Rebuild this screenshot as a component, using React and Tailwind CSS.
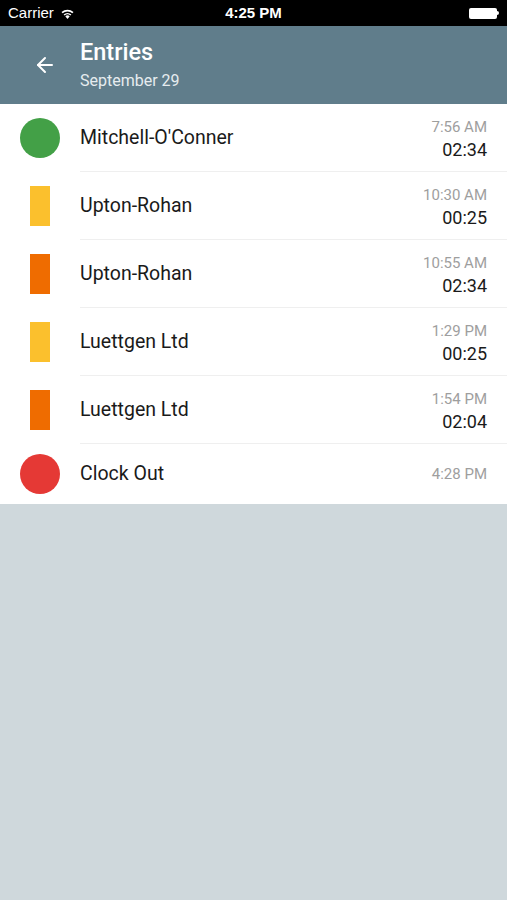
import { ArrowLeft } from 'lucide-react';

const entries = [
  { name: "Mitchell-O'Conner", time: '7:56 AM', duration: '02:34', marker: 'circle', color: 'bg-[#43a047]' },
  { name: 'Upton-Rohan', time: '10:30 AM', duration: '00:25', marker: 'bar', color: 'bg-[#fbc02d]' },
  { name: 'Upton-Rohan', time: '10:55 AM', duration: '02:34', marker: 'bar', color: 'bg-[#ef6c00]' },
  { name: 'Luettgen Ltd', time: '1:29 PM', duration: '00:25', marker: 'bar', color: 'bg-[#fbc02d]' },
  { name: 'Luettgen Ltd', time: '1:54 PM', duration: '02:04', marker: 'bar', color: 'bg-[#ef6c00]' },
  { name: 'Clock Out', time: '4:28 PM', marker: 'circle', color: 'bg-[#e53935]' },
];

const StatusBar = () => (
  <div className="h-[26px] bg-black text-white flex items-center justify-between px-2 font-['Liberation_Sans',sans-serif] relative">
    <div className="flex items-center gap-1.5 text-[15px]">
      <span>Carrier</span>
      <svg width="15" height="11" viewBox="0 0 15 11" fill="white">
        <path d="M7.5 11 L5.3 8.3 A3.4 3.4 0 0 1 9.7 8.3 Z" />
        <path d="M3.6 6.4 A5.8 5.8 0 0 1 11.4 6.4 L10.3 7.6 A4.2 4.2 0 0 0 4.7 7.6 Z" />
        <path d="M1.5 4.1 A9 9 0 0 1 13.5 4.1 L12.4 5.3 A7.4 7.4 0 0 0 2.6 5.3 Z" />
      </svg>
    </div>
    <span className="absolute left-1/2 -translate-x-1/2 text-[15px] font-bold">4:25 PM</span>
    <div className="flex items-center">
      <div className="w-[28px] h-[11px] bg-white rounded-[2px]" />
      <div className="w-[2px] h-[4px] bg-white rounded-r-sm" />
    </div>
  </div>
);

const Row = ({ entry, last }) => (
  <div className="flex items-stretch">
    <div className="w-[80px] flex items-center justify-center shrink-0">
      {entry.marker === 'circle' ? (
        <div className={`w-[40px] h-[40px] rounded-full ${entry.color}`} />
      ) : (
        <div className={`w-[20px] h-[40px] ${entry.color}`} />
      )}
    </div>
    <div
      className={`flex-1 flex items-center justify-between pr-5 ${
        last ? 'h-[60px]' : 'h-[68px] border-b border-[#efefef]'
      }`}
    >
      <span className="text-[19.5px] text-[#1a1a1a]">{entry.name}</span>
      <div className={`flex flex-col items-end ${entry.duration ? 'pt-[4px]' : ''}`}>
        <span className="text-[15px] text-[#9e9e9e] leading-[20px]">{entry.time}</span>
        {entry.duration && (
          <span className="text-[18px] text-[#1a1a1a] leading-[25px]">{entry.duration}</span>
        )}
      </div>
    </div>
  </div>
);

export default function App() {
  return (
    <div className="w-[507px] h-[900px] bg-[#cfd8dc] font-['Roboto',sans-serif] flex flex-col">
      <StatusBar />
      <div className="h-[78px] bg-[#607d8b] flex items-center">
        <div className="w-[80px] flex justify-center pl-[10px]">
          <ArrowLeft size={24} strokeWidth={2} className="text-white" />
        </div>
        <div className="flex flex-col text-white">
          <span className="text-[23.5px] font-medium leading-[30px]">Entries</span>
          <span className="text-[16px] text-[#e6ecef] leading-[24px] mt-[2px]">September 29</span>
        </div>
      </div>
      <div className="bg-white">
        {entries.map((entry, i) => (
          <Row key={i} entry={entry} last={i === entries.length - 1} />
        ))}
      </div>
    </div>
  );
}
